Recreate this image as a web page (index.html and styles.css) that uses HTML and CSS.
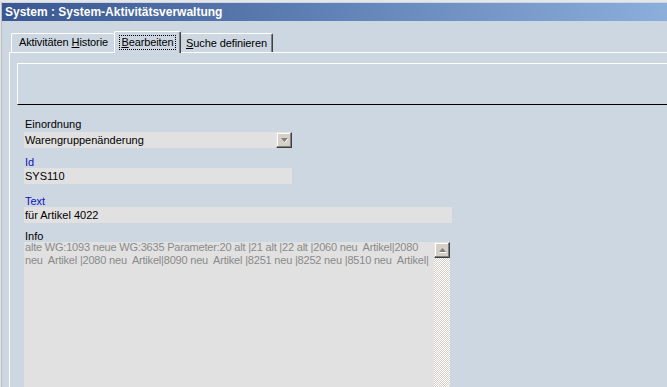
FILE: index.html
```html
<!DOCTYPE html>
<html lang="de">
<head>
<meta charset="utf-8">
<title>System-Aktivitätsverwaltung</title>
<link rel="stylesheet" href="styles.css">
</head>
<body>
<div class="win">
  <div class="title">System : System-Aktivitätsverwaltung</div>
  <div class="tabs">
    <div class="tab tab-hist">Aktivitäten <u>H</u>istorie</div>
    <div class="tab tab-edit active"><span class="focus"><u>B</u>earbeiten</span></div>
    <div class="tab tab-search"><u>S</u>uche definieren</div>
  </div>
  <div class="panel">
    <div class="header"></div>
    <div class="form">
      <div class="label g-einordnung">Einordnung</div>
      <div class="field combo">
        <span class="val">Warengruppenänderung</span>
        <span class="btn">
          <svg width="7" height="5" viewBox="0 0 7 5"><path d="M0 0h7L3.5 4z" fill="#808080"/><path d="M4 4.5l3-4" stroke="#fff" stroke-width="1" fill="none"/></svg>
        </span>
      </div>
      <div class="label blue g-id">Id</div>
      <div class="field short">SYS110</div>
      <div class="label blue g-text">Text</div>
      <div class="field wide">für Artikel 4022</div>
      <div class="label g-info">Info</div>
      <div class="memo">
        <div class="memo-text">
          <div class="line">alte WG:1093 neue WG:3635 Parameter:20 alt |21 alt |22 alt |2060 neu  Artikel|2080</div>
          <div class="line">neu  Artikel |2080 neu  Artikel|8090 neu  Artikel |8251 neu |8252 neu |8510 neu  Artikel|</div>
        </div>
        <div class="scroll">
          <span class="btn up">
            <svg width="7" height="5" viewBox="0 0 7 5"><path d="M0 4h7L3.5 0z" fill="#808080"/><path d="M0.5 4.5h7" stroke="#fff" stroke-width="1"/></svg>
          </span>
          <div class="track"></div>
        </div>
      </div>
    </div>
  </div>
</div>
</body>
</html>
```

FILE: styles.css
```css
html, body {
  margin: 0;
  padding: 0;
}
body {
  width: 667px;
  height: 387px;
  overflow: hidden;
  background: #cdd7e1;
  font-family: "Liberation Sans", Arial, sans-serif;
  font-size: 11px;
  color: #000;
}
.win {
  height: 387px;
  border-left: 1px solid #dfe5ec;
  box-shadow: inset 1px 0 0 #bdbdbd;
  border-top: 2px solid #e4e6ea;
  box-sizing: border-box;
  padding-left: 1px;
}
.title {
  height: 18px;
  margin-top: 1px;
  line-height: 18px;
  padding-left: 3px;
  background: linear-gradient(to right, #3a5791 0%, #5d7eb2 45%, #8caedb 100%);
  color: #fff;
  font-weight: bold;
  font-size: 12px;
  white-space: nowrap;
}
.tabs {
  display: flex;
  align-items: flex-end;
  height: 21px;
  margin-top: 10px;
  padding-left: 9px;
  position: relative;
  z-index: 2;
}
.tab {
  box-sizing: border-box;
  height: 19px;
  border-top: 1px solid #fff;
  border-left: 1px solid #fff;
  border-right: 1px solid #404040;
  box-shadow: inset -1px 0 0 #808080;
  line-height: 17px;
  text-align: center;
  white-space: nowrap;
  border-radius: 2px 2px 0 0;
  letter-spacing: -0.1px;
}
.tab-hist { width: 103px; padding-left: 1px; border-right: none; box-shadow: none; }
.tab-edit { width: 67px; }
.tab-search { width: 92px; border-left: none; padding-top: 1px; }
.tab.active {
  height: 22px;
  margin-bottom: -1px;
  background: #cdd7e1;
  padding-top: 1px;
  line-height: 19px;
}
.focus {
  outline: 1px dotted #000;
  outline-offset: 0;
  padding: 0 1px 1px;
}
.panel {
  margin-left: 7px;
  border-top: 1px solid #fff;
  border-left: 1px solid #fff;
  padding: 10px 0 0 7px;
}
.header {
  height: 40px;
  border-top: 1px solid #fff;
  border-left: 1px solid #fff;
  border-bottom: 1px solid #000;
}
.form {
  padding-left: 7px;
}
.label {
  height: 12px;
  line-height: 12px;
  padding-left: 1px;
  white-space: nowrap;
}
.blue { color: #1010b8; }
.g-einordnung { margin-top: 13px; margin-bottom: 2px; }
.g-id { margin-top: 8px; }
.g-text { margin-top: 11px; }
.g-info { margin-top: 7px; }
.field {
  height: 16px;
  line-height: 16px;
  background: #e1e1e1;
  padding-left: 1px;
  box-sizing: border-box;
  white-space: nowrap;
}
.combo {
  width: 268px;
  display: flex;
  justify-content: space-between;
}
.short { width: 268px; }
.wide { width: 428px; }
.btn {
  box-sizing: border-box;
  width: 16px;
  height: 16px;
  flex: none;
  background: #d4d0c8;
  border-top: 1px solid #e6e4df;
  border-left: 1px solid #e6e4df;
  border-right: 1px solid #404040;
  border-bottom: 1px solid #404040;
  box-shadow: inset -1px -1px 0 #808080, inset 1px 1px 0 #fff;
  display: flex;
  align-items: center;
  justify-content: center;
}
.btn svg { display: block; }
.memo {
  width: 426px;
  height: 160px;
  display: flex;
  background: #e1e1e1;
}
.memo-text {
  flex: 1;
  min-width: 0;
  overflow: hidden;
  padding-left: 1px;
  color: #8a8a8a;
  margin-top: -1px;
  letter-spacing: -0.2px;
}
.line {
  line-height: 13px;
  white-space: pre;
}
.scroll {
  width: 16px;
  flex: none;
  display: flex;
  flex-direction: column;
}
.track {
  flex: 1;
  background-color: #fff;
  background-image: repeating-conic-gradient(#d4d0c8 0 25%, #fff 0 50%);
  background-size: 2px 2px;
}
```
